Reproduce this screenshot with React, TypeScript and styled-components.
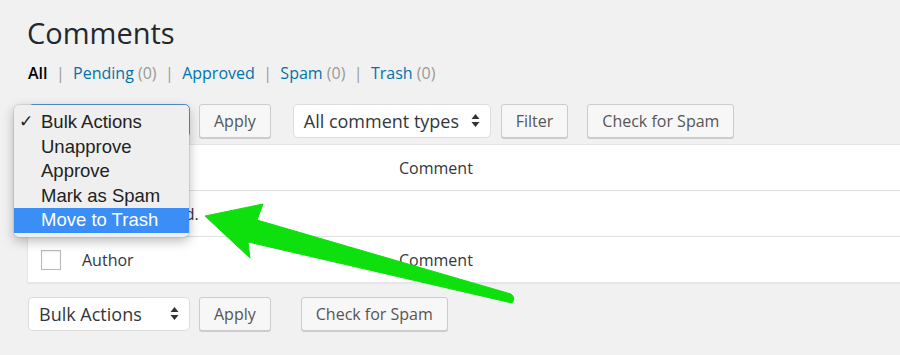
import React from "react";
import styled, { createGlobalStyle } from "styled-components";

const GlobalStyle = createGlobalStyle`
  html, body {
    margin: 0;
    padding: 0;
    background: #f1f1f1;
    overflow: hidden;
  }
  body {
    font-family: "Open Sans", "Liberation Sans", sans-serif;
    color: #444;
  }
`;

const Page = styled.div`
  position: relative;
  width: 900px;
  height: 355px;
  padding-left: 27px;
  box-sizing: border-box;
  overflow: hidden;
`;

const Title = styled.h1`
  margin: 0;
  padding-top: 14px;
  font-size: 29px;
  font-weight: 400;
  line-height: 38px;
  color: #23282d;
`;

const Filters = styled.ul`
  display: flex;
  align-items: center;
  list-style: none;
  margin: 10px 0 0 1px;
  padding: 0;
  font-size: 16px;
  line-height: 22px;
  color: #666;
`;

const FilterItem = styled.li`
  display: flex;
  align-items: center;
  white-space: pre;
`;

const FilterLink = styled.span<{ $current?: boolean }>`
  color: ${(p) => (p.$current ? "#000" : "#0073aa")};
  font-weight: ${(p) => (p.$current ? 600 : 400)};
`;

const Count = styled.span`
  color: #999;
`;

const Sep = styled.span`
  color: #999;
  margin: 0 8.4px;
`;

const TableNav = styled.div<{ $top?: boolean }>`
  display: flex;
  align-items: center;
  height: 35px;
  margin: ${(p) => (p.$top ? "19px 0 6px" : "13px 0 0")};
`;

const Select = styled.div<{ $w: number; $gap?: number; $focus?: boolean }>`
  display: flex;
  align-items: center;
  justify-content: space-between;
  box-sizing: border-box;
  width: ${(p) => p.$w}px;
  height: 34px;
  margin-left: ${(p) => p.$gap ?? 1}px;
  padding: 0 10px 0 10px;
  background: #fff;
  border: 1px solid ${(p) => (p.$focus ? "#5b9dd9" : "#ddd")};
  border-radius: 5px;
  font-size: 18px;
  color: #32373c;
`;

const Button = styled.div<{ $gap: number }>`
  display: flex;
  align-items: center;
  box-sizing: border-box;
  height: 34px;
  margin-left: ${(p) => p.$gap}px;
  padding: 0 14px;
  background: #f7f7f7;
  border: 1px solid #ccc;
  border-radius: 3px;
  box-shadow: 0 1px 0 #ccc;
  font-size: 16px;
  color: #555;
`;

const Table = styled.div`
  background: #fff;
  border: 1px solid #e5e5e5;
  border-right: none;
  box-shadow: 0 1px 1px rgba(0, 0, 0, 0.04);
`;

const Row = styled.div<{ $line?: boolean }>`
  display: flex;
  align-items: center;
  height: 45px;
  border-top: ${(p) => (p.$line ? "1px solid #e1e1e1" : "none")};
  font-size: 16px;
  color: #32373c;
`;

const CheckCell = styled.div`
  width: 54px;
  padding-left: 13px;
  box-sizing: border-box;
`;

const Box = styled.div`
  width: 20px;
  height: 20px;
  box-sizing: border-box;
  border: 1px solid #b4b9be;
  background: #fff;
  box-shadow: inset 0 1px 2px rgba(0, 0, 0, 0.07);
`;

const AuthorCell = styled.div`
  width: 317px;
`;

const EmptyCell = styled.div`
  padding-left: 13px;
`;

const Menu = styled.div`
  position: absolute;
  left: 14px;
  top: 105px;
  width: 175px;
  padding: 5px 0 4px;
  background: #efefef;
  border-radius: 5px;
  box-shadow: 0 4px 12px rgba(0, 0, 0, 0.28), 0 0 0 1px rgba(0, 0, 0, 0.08);
  font-family: "Liberation Sans", Arial, sans-serif;
  font-size: 18.5px;
  color: #222;
`;

const MenuItem = styled.div<{ $active?: boolean }>`
  position: relative;
  height: 24.5px;
  line-height: 24.5px;
  padding-left: 27px;
  background: ${(p) => (p.$active ? "#3a8ef6" : "transparent")};
  color: ${(p) => (p.$active ? "#fff" : "#222")};
`;

const Check = styled.span`
  position: absolute;
  left: 5px;
  font-size: 17px;
`;

const Arrow = styled.svg`
  position: absolute;
  left: 0;
  top: 0;
  pointer-events: none;
`;

const UpDown = () => (
  <svg width="9" height="15" viewBox="0 0 9 15">
    <path d="M4.5 1 L8.5 6 H0.5 Z M4.5 14 L8.5 9 H0.5 Z" fill="#333" />
  </svg>
);

const filters = [
  { label: "All", current: true },
  { label: "Pending", count: 0 },
  { label: "Approved" },
  { label: "Spam", count: 0 },
  { label: "Trash", count: 0 },
];

const actions = ["Bulk Actions", "Unapprove", "Approve", "Mark as Spam", "Move to Trash"];

export default function App() {
  return (
    <Page>
      <GlobalStyle />
      <Title>Comments</Title>
      <Filters>
        {filters.map((f, i) => (
          <FilterItem key={f.label}>
            {i > 0 && <Sep>|</Sep>}
            <FilterLink $current={f.current}>{f.label}</FilterLink>
            {f.count !== undefined && <Count> ({f.count})</Count>}
          </FilterItem>
        ))}
      </Filters>

      <TableNav $top>
        <Select $w={162} $focus>
          Bulk Actions
          <UpDown />
        </Select>
        <Button $gap={9}>Apply</Button>
        <Select $w={198} $gap={22}>
          All comment types
          <UpDown />
        </Select>
        <Button $gap={10}>Filter</Button>
        <Button $gap={19}>Check for Spam</Button>
      </TableNav>

      <Table>
        <Row>
          <CheckCell>
            <Box />
          </CheckCell>
          <AuthorCell>Author</AuthorCell>
          <div>Comment</div>
        </Row>
        <Row $line>
          <EmptyCell>No comments found.</EmptyCell>
        </Row>
        <Row $line>
          <CheckCell>
            <Box />
          </CheckCell>
          <AuthorCell>Author</AuthorCell>
          <div>Comment</div>
        </Row>
      </Table>

      <TableNav>
        <Select $w={162}>
          Bulk Actions
          <UpDown />
        </Select>
        <Button $gap={9}>Apply</Button>
        <Button $gap={30}>Check for Spam</Button>
      </TableNav>

      <Menu>
        {actions.map((a, i) => (
          <MenuItem key={a} $active={i === actions.length - 1}>
            {i === 0 && <Check>✓</Check>}
            {a}
          </MenuItem>
        ))}
      </Menu>

      <Arrow width="900" height="355" viewBox="0 0 900 355">
        <path
          d="M205 216 L263 204 L257 220 L511 294 Q516 298 512 303 L248 242 L250 258 Z"
          fill="#0de00d"
          stroke="#0de00d"
          strokeWidth="1"
          strokeLinejoin="round"
        />
      </Arrow>
    </Page>
  );
}
